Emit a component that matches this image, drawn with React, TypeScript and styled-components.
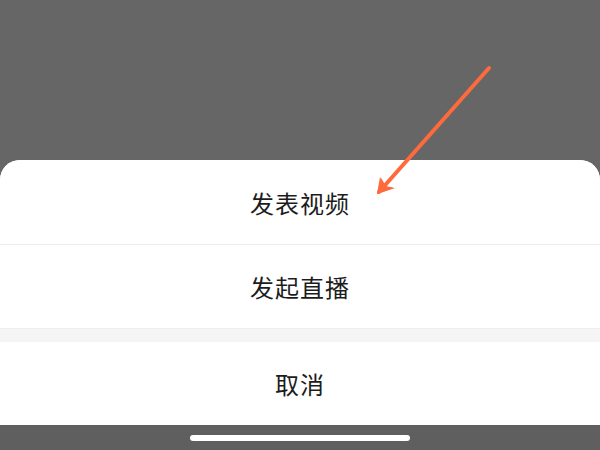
import React from "react";
import styled, { createGlobalStyle } from "styled-components";

const GlobalStyle = createGlobalStyle`
  html, body {
    margin: 0;
    padding: 0;
    background: #666666;
  }
  body {
    font-family: "Noto Sans CJK SC", "Noto Sans", sans-serif;
  }
`;

const Screen = styled.div`
  position: relative;
  width: 600px;
  height: 450px;
  display: flex;
  flex-direction: column;
  overflow: hidden;
  background: #666666;
`;

const Backdrop = styled.div`
  height: 160px;
  flex-shrink: 0;
`;

const Sheet = styled.div`
  display: flex;
  flex-direction: column;
  background: #ffffff;
  border-radius: 20px 20px 0 0;
  overflow: hidden;
`;

const ActionRow = styled.button<{ $height: number; $divider?: boolean }>`
  height: ${(p) => p.$height}px;
  display: flex;
  align-items: center;
  justify-content: center;
  border: none;
  border-bottom: ${(p) => (p.$divider ? "1px solid #ececec" : "none")};
  background: #ffffff;
  font-family: "Noto Sans CJK SC", "Noto Sans", sans-serif;
  font-size: 24px;
  letter-spacing: 1px;
  color: #1c1c1c;
  padding: 0;
`;

const GroupGap = styled.div`
  height: 14px;
  background: #f5f5f5;
  border-top: 1px solid #eeeeee;
  box-sizing: border-box;
`;

const HomeBar = styled.div`
  height: 25px;
  background: #5f5f5f;
  display: flex;
  align-items: center;
  justify-content: center;
`;

const HomeIndicator = styled.div`
  width: 220px;
  height: 6px;
  border-radius: 3px;
  background: #ffffff;
`;

const ArrowOverlay = styled.svg`
  position: absolute;
  left: 0;
  top: 0;
  pointer-events: none;
`;

export default function App() {
  return (
    <>
      <GlobalStyle />
      <Screen>
        <Backdrop />
        <Sheet>
          <ActionRow $height={85} $divider>发表视频</ActionRow>
          <ActionRow $height={83}>发起直播</ActionRow>
          <GroupGap />
          <ActionRow $height={83}>取消</ActionRow>
        </Sheet>
        <HomeBar>
          <HomeIndicator />
        </HomeBar>
        <ArrowOverlay width="600" height="450" viewBox="0 0 600 450">
          <g stroke="#ff6a3d" strokeWidth="4" strokeLinecap="round" fill="none">
            <line x1="489" y1="68" x2="379" y2="192" />
          </g>
          <path d="M377 194 L380 177 L384 185 Z" fill="#ff6a3d" />
          <path d="M377 194 L395 188 L387 187 Z" fill="#ff6a3d" />
          <path d="M377 194 L381 178 L386 186 L394 188 Z" fill="#ff6a3d" />
        </ArrowOverlay>
      </Screen>
    </>
  );
}
